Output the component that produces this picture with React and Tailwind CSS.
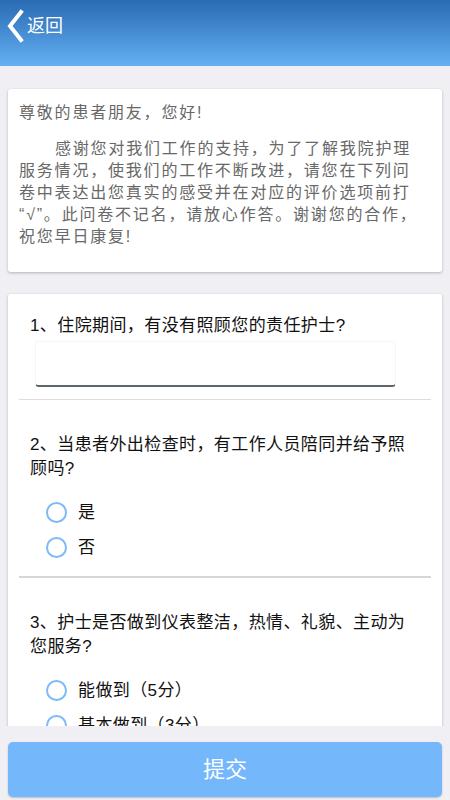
import { useState } from 'react';

const questions = [
  { id: 2, title: '2、当患者外出检查时，有工作人员陪同并给予照顾吗?', options: ['是', '否'] },
  { id: 3, title: '3、护士是否做到仪表整洁，热情、礼貌、主动为您服务?', options: ['能做到（5分）', '基本做到（3分）', '做不到（0分）'] },
];

function Radio({ label, checked, onChange }) {
  return (
    <label className="flex h-[35px] items-center" onClick={onChange}>
      <span className={`ml-[27px] flex h-[21px] w-[21px] items-center justify-center rounded-full border-2 ${checked ? 'border-[#3b94f0]' : 'border-[#7dbaf6]'}`}>
        {checked ? <span className="h-[11px] w-[11px] rounded-full bg-[#3b94f0]" /> : null}
      </span>
      <span className="ml-[11px] text-[17px] tracking-[0.4px] text-[#111]">{label}</span>
    </label>
  );
}

export default function App() {
  const [answers, setAnswers] = useState({});

  return (
    <div className="flex h-[800px] w-[450px] flex-col overflow-hidden bg-[#efeff4]" style={{ fontFamily: '"Liberation Sans", "Noto Sans CJK SC", sans-serif' }}>
      <header className="flex h-[66px] shrink-0 items-center bg-gradient-to-b from-[#2a6bb4] to-[#64b0f2] pb-[14px]">
        <svg width="24" height="34" viewBox="0 0 24 34" className="ml-[4px]">
          <path d="M17 3 L6 17 L17 31" fill="none" stroke="#fff" strokeWidth="4" strokeLinecap="square" />
        </svg>
        <span className="ml-[-1px] text-[18px] text-white">返回</span>
      </header>

      <main className="flex-1 overflow-hidden px-[8px] pt-[23px]">
        <section className="rounded-[3px] bg-white pb-[24px] pl-[11px] pr-[18px] pt-[13px] text-[16px] leading-[22px] tracking-[1.8px] text-[#686868] shadow-[0_1px_3px_rgba(0,0,0,0.25)]">
          <p>尊敬的患者朋友，您好!</p>
          <p className="mt-[14px] indent-[36px]">
            感谢您对我们工作的支持，为了了解我院护理服务情况，使我们的工作不断改进，请您在下列问卷中表达出您真实的感受并在对应的评价选项前打<wbr />“√”。此问卷不记名，请放心作答。谢谢您的合作，祝您早日康复!
          </p>
        </section>

        <section className="mt-[22px] rounded-[3px] bg-white px-[11px] pt-[20px] shadow-[0_1px_3px_rgba(0,0,0,0.25)]">
          <div className="border-b border-[#ddd] pb-[12px]">
            <p className="pl-[11px] pr-[20px] text-[17px] leading-[24px] tracking-[0.4px] text-[#111]">1、住院期间，有没有照顾您的责任护士?</p>
            <input className="ml-[16px] mt-[3px] h-[46px] w-[361px] rounded-[4px] border border-[#f6f6f6] border-b-2 border-b-[#5d666b] px-[8px] text-[16px] outline-none" />
          </div>

          {questions.map((q, i) => (
            <div key={q.id} className={i === 0 ? 'border-b-2 border-[#d6d6d6] pb-[11px] pt-[33px]' : 'pt-[33px]'}>
              <p className="pl-[11px] pr-[20px] text-[17px] leading-[24px] tracking-[0.4px] text-[#111]">{q.title}</p>
              <div className="mt-[14px]">
                {q.options.map((opt) => (
                  <Radio key={opt} label={opt} checked={answers[q.id] === opt} onChange={() => setAnswers({ ...answers, [q.id]: opt })} />
                ))}
              </div>
            </div>
          ))}
        </section>
      </main>

      <footer className="shrink-0 px-[8px] pb-[3px] pt-[16px]">
        <button className="h-[55px] w-full rounded-[5px] bg-[#74b7fb] text-[22px] text-white shadow-[0_1px_2px_rgba(0,0,0,0.2)]">提交</button>
      </footer>
    </div>
  );
}
